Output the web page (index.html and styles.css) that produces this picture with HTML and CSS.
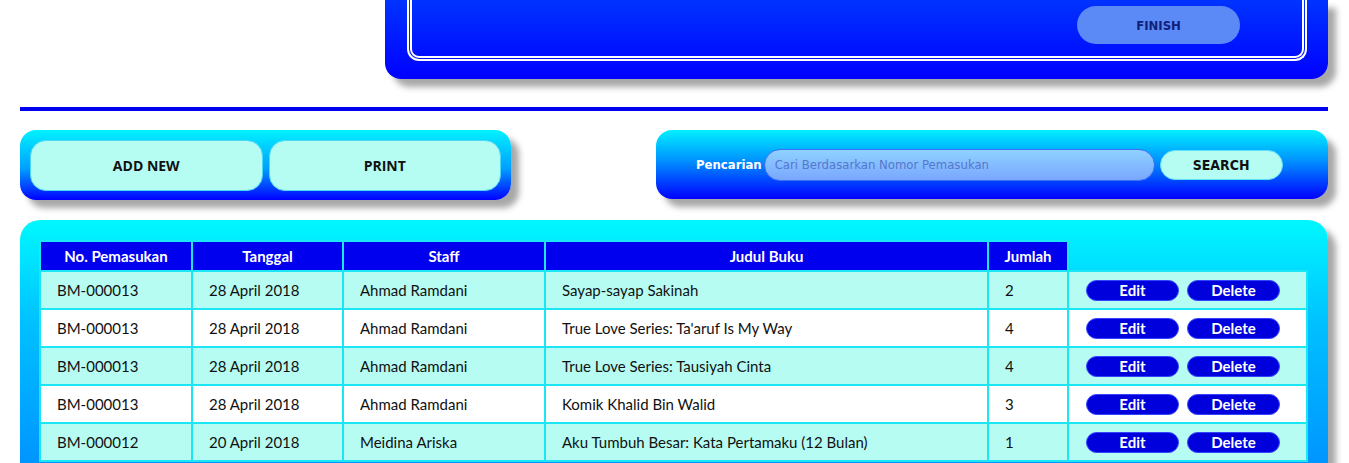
FILE: index.html
```html
<!DOCTYPE html>
<html>
<head>
<meta charset="utf-8">
<link rel="stylesheet" href="styles.css">
</head>
<body>
<div class="page">
  <div class="top-panel">
    <div class="top-inner">
      <button class="finish">FINISH</button>
    </div>
  </div>
  <div class="rule"></div>
  <div class="tools">
    <div class="btn-panel">
      <button class="big-btn">ADD NEW</button>
      <button class="big-btn">PRINT</button>
    </div>
    <div class="search-panel">
      <span class="search-label">Pencarian</span>
      <input class="search-input" type="text" placeholder="Cari Berdasarkan Nomor Pemasukan">
      <button class="search-btn">SEARCH</button>
    </div>
  </div>
  <div class="table-panel">
    <table class="data">
      <thead>
        <tr>
          <th class="c1">No. Pemasukan</th>
          <th class="c2">Tanggal</th>
          <th class="c3">Staff</th>
          <th class="c4">Judul Buku</th>
          <th class="c5">Jumlah</th>
          <th class="c6 empty"></th>
        </tr>
      </thead>
      <tbody>
        <tr class="alt">
          <td>BM-000013</td><td>28 April 2018</td><td>Ahmad Ramdani</td><td>Sayap-sayap Sakinah</td><td>2</td>
          <td class="act"><button class="pill">Edit</button><button class="pill">Delete</button></td>
        </tr>
        <tr>
          <td>BM-000013</td><td>28 April 2018</td><td>Ahmad Ramdani</td><td>True Love Series: Ta'aruf Is My Way</td><td>4</td>
          <td class="act"><button class="pill">Edit</button><button class="pill">Delete</button></td>
        </tr>
        <tr class="alt">
          <td>BM-000013</td><td>28 April 2018</td><td>Ahmad Ramdani</td><td>True Love Series: Tausiyah Cinta</td><td>4</td>
          <td class="act"><button class="pill">Edit</button><button class="pill">Delete</button></td>
        </tr>
        <tr>
          <td>BM-000013</td><td>28 April 2018</td><td>Ahmad Ramdani</td><td>Komik Khalid Bin Walid</td><td>3</td>
          <td class="act"><button class="pill">Edit</button><button class="pill">Delete</button></td>
        </tr>
        <tr class="alt">
          <td>BM-000012</td><td>20 April 2018</td><td>Meidina Ariska</td><td>Aku Tumbuh Besar: Kata Pertamaku (12 Bulan)</td><td>1</td>
          <td class="act"><button class="pill">Edit</button><button class="pill">Delete</button></td>
        </tr>
      </tbody>
    </table>
  </div>
</div>
</body>
</html>
```

FILE: styles.css
```css
* { box-sizing: border-box; }
html, body { margin: 0; padding: 0; background: #fff; overflow: hidden; }
body { font-family: Lato, "Open Sans", sans-serif; }
.page { padding: 0 21px 0 20px; width: 1349px; }

.top-panel {
  margin-left: auto;
  width: 943px;
  height: 79px;
  background: linear-gradient(#0033ff, #0000ff);
  border-radius: 0 0 16px 16px;
  padding: 0 21px 18px 22px;
  box-shadow: 8px 8px 6px #a8a8a8;
}
.top-inner {
  height: 100%;
  border: 5px double #fff;
  border-top: none;
  border-radius: 0 0 12px 12px;
  display: flex;
  justify-content: flex-end;
  align-items: flex-start;
  padding: 6px 62px 0 0;
}
.finish {
  width: 163px;
  height: 38px;
  border: none;
  border-radius: 19px;
  background: #5b8af6;
  color: #10207a;
  font-family: "DejaVu Sans Condensed", "Liberation Sans", sans-serif;
  font-stretch: condensed;
  font-size: 13px;
  font-weight: bold;
}

.rule { height: 4px; background: #0000ee; margin-top: 28px; }

.tools {
  display: flex;
  justify-content: space-between;
  margin-top: 19px;
}
.btn-panel {
  width: 491px;
  height: 70px;
  border-radius: 16px;
  background: linear-gradient(#00f2ff, #00a0ff 55%, #0000ff);
  padding: 10px 10px 9px 10px;
  display: flex;
  gap: 6px;
  box-shadow: 8px 8px 6px #a8a8a8;
}
.big-btn {
  flex: 1;
  border: 1px solid #4fd8f4;
  border-radius: 16px;
  background: #b5fcf3;
  font-family: "Open Sans", Lato, sans-serif;
  font-weight: bold;
  font-size: 14px;
  color: #111;
}
.search-panel {
  width: 672px;
  height: 69px;
  border-radius: 16px;
  background: linear-gradient(#00f0ff, #0090ff 45%, #0000ff);
  display: flex;
  align-items: center;
  padding: 0 44px 0 40px;
  box-shadow: 8px 8px 6px #a8a8a8;
}
.search-label {
  color: #fff;
  font-family: "DejaVu Sans Condensed", "Liberation Sans", sans-serif;
  font-stretch: condensed;
  font-weight: bold;
  font-size: 13px;
  margin-right: 2px;
}
.search-input {
  width: 391px;
  height: 32px;
  border-radius: 16px;
  border: 1px solid #3a70f0;
  background: linear-gradient(#8ed2ff, #7aa6ff);
  padding: 0 10px;
  font-family: "DejaVu Sans Condensed", "Liberation Sans", sans-serif;
  font-stretch: condensed;
  font-size: 13px;
  color: #3355bb;
  outline: none;
}
.search-input::placeholder { color: #5577cc; }
.search-btn {
  margin-left: 5px;
  width: 123px;
  height: 30px;
  border-radius: 15px;
  border: 1px solid #60e0f4;
  background: #b5fcf3;
  font-family: "DejaVu Sans Condensed", "Liberation Sans", sans-serif;
  font-stretch: condensed;
  font-weight: bold;
  font-size: 14px;
  color: #111;
}

.table-panel {
  margin-top: 20px;
  border-radius: 20px 20px 0 0;
  background: linear-gradient(#00f8ff, #00c0ff 40%, #0090ff);
  padding: 20px 20px 0 19px;
  height: 260px;
  box-shadow: 8px 8px 6px #a8a8a8;
}
.data {
  border-collapse: collapse;
  width: 1269px;
  font-size: 15px;
  color: #111;
}
.data th, .data td { border: 2px solid #1ae6f6; }
.data th {
  background: #0000ee;
  color: #fff;
  font-weight: bold;
  height: 30px;
  font-size: 15px;
  padding: 0;
}
.data th.empty { background: transparent; border: none; }
.data td { height: 38px; padding: 0 0 0 16px; background: #fff; }
.data tr.alt td { background: #b6fcf3; }
.c1 { width: 152px; }
.c2 { width: 151px; }
.c3 { width: 202px; }
.c4 { width: 443px; }
.c5 { width: 80px; }
.data td.act { padding: 0 0 0 17px; }
.pill {
  width: 93px;
  height: 21px;
  border-radius: 11px;
  border: 1px solid #3344ff;
  background: #0000dd;
  color: #fff;
  font-family: Lato, "Open Sans", sans-serif;
  font-weight: bold;
  font-size: 15px;
  line-height: 17px;
  padding: 0;
  margin-right: 8px;
  vertical-align: middle;
}
```
